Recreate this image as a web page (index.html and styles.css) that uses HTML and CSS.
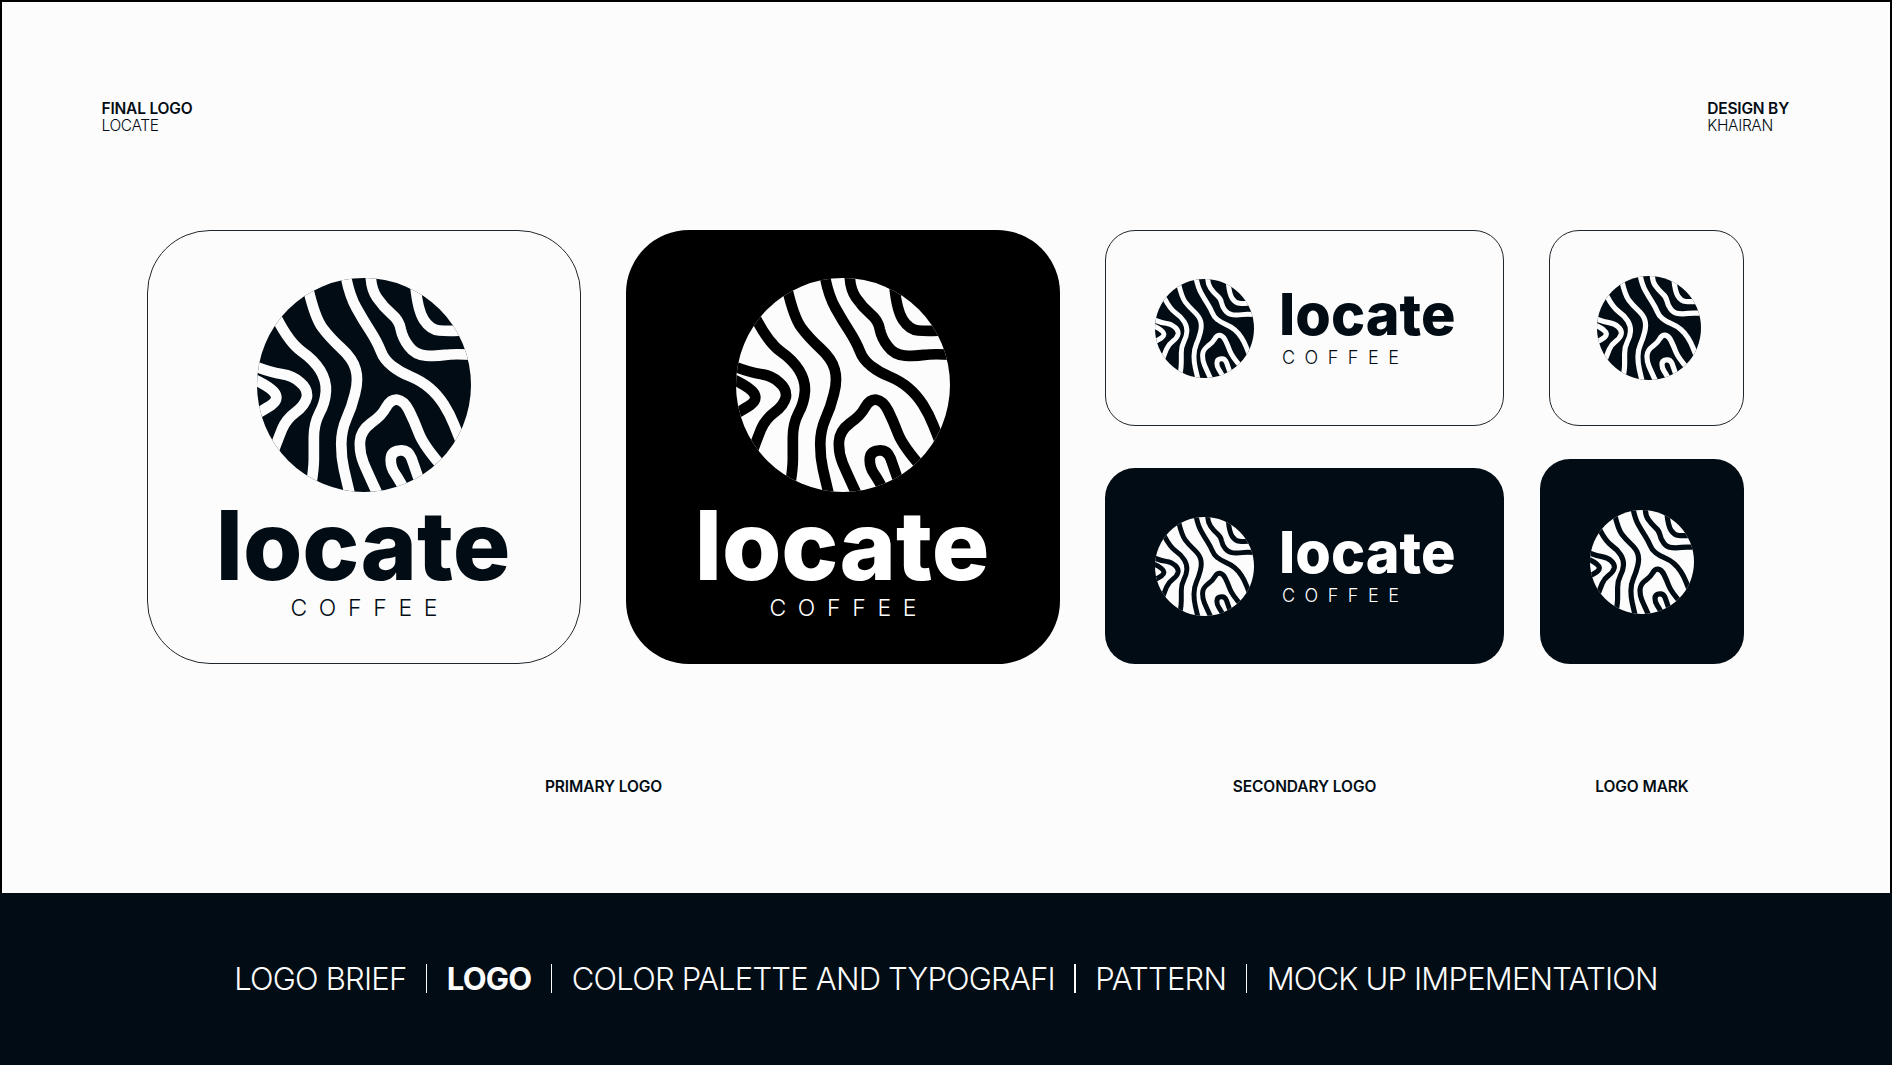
FILE: index.html
```html
<!DOCTYPE html>
<html lang="en">
<head>
<meta charset="utf-8">
<title>Locate Coffee - Final Logo</title>
<link rel="stylesheet" href="styles.css">
</head>
<body>
<svg class="defs" aria-hidden="true">
  <defs>
    <clipPath id="disc"><circle cx="372" cy="373" r="320"/></clipPath>
    <symbol id="mark" viewBox="52 53 640 640">
      <circle class="mark-disc" cx="372" cy="373" r="320"/>
      <g class="mark-cuts" clip-path="url(#disc)">
        <path d="M316 40Q328 105 349 142Q370 180 391 212Q412 245 422 271Q432 298 456 316Q480 335 512 348Q545 362 568 382Q592 402 611 432Q630 462 642 493Q655 525 680 590"/>
        <path d="M392 40Q392 85 411 112Q430 140 454 160Q478 180 482 206Q487 232 506 257Q525 283 557 285Q590 287 615 283Q640 279 710 283"/>
        <path d="M526 80Q533 150 551 178Q570 207 597 210Q625 213 690 209"/>
        <path d="M205 85Q225 170 247 201Q270 232 304 263Q339 295 347 326Q356 358 345 399Q335 440 319 475Q304 510 304 550Q304 590 312 625Q320 660 332 710"/>
        <path d="M112 175Q150 248 186 273Q222 298 241 329Q260 360 258 392Q256 425 239 457Q222 490 222 530Q222 570 222 595Q222 620 215 665"/>
        <path d="M40 315Q90 335 125 340Q160 345 181 365Q205 385 201 410Q195 435 167 455Q140 475 127 505Q115 535 100 575"/>
        <path d="M35 352Q75 370 93 385Q125 410 96 432Q80 443 40 465"/>
        <path d="M420 715Q385 640 371 607Q358 575 360 542Q362 510 393 487Q425 465 438 440Q452 415 472 417Q492 420 507 450Q522 480 536 517Q550 555 612 625"/>
        <path d="M505 710Q480 660 466 640Q452 620 452 597Q452 572 478 569Q503 565 514 592Q524 620 548 690"/>
      </g>
    </symbol>
  </defs>
</svg>

<div class="page">
  <main class="sheet">
    <header class="head">
      <div class="head-block">
        <div class="head-title">FINAL LOGO</div>
        <div class="head-sub">LOCATE</div>
      </div>
      <div class="head-block">
        <div class="head-title">DESIGN BY</div>
        <div class="head-sub">KHAIRAN</div>
      </div>
    </header>

    <section class="gallery">
      <div class="primary-pair">
        <div class="card card-primary theme-light">
          <svg class="logo-mark"><use href="#mark"/></svg>
          <div class="word">locate</div>
          <div class="sub">COFFEE</div>
        </div>
        <div class="card card-primary theme-black">
          <svg class="logo-mark"><use href="#mark"/></svg>
          <div class="word">locate</div>
          <div class="sub">COFFEE</div>
        </div>
      </div>
      <div class="small-set">
        <div class="small-row small-row-top">
          <div class="card card-wide theme-light">
            <svg class="wide-mark"><use href="#mark"/></svg>
            <div class="wide-text">
              <div class="wide-word">locate</div>
              <div class="wide-sub">COFFEE</div>
            </div>
          </div>
          <div class="card card-icon card-icon-light theme-light">
            <svg class="icon-mark"><use href="#mark"/></svg>
          </div>
        </div>
        <div class="small-row small-row-bottom">
          <div class="card card-wide theme-dark">
            <svg class="wide-mark"><use href="#mark"/></svg>
            <div class="wide-text">
              <div class="wide-word">locate</div>
              <div class="wide-sub">COFFEE</div>
            </div>
          </div>
          <div class="card card-icon card-icon-dark theme-dark">
            <svg class="icon-mark"><use href="#mark"/></svg>
          </div>
        </div>
      </div>
    </section>

    <section class="captions">
      <div class="caption caption-primary">PRIMARY LOGO</div>
      <div class="caption-set">
        <div class="caption caption-secondary">SECONDARY LOGO</div>
        <div class="caption caption-mark">LOGO MARK</div>
      </div>
    </section>
  </main>

  <footer class="band">
    <span class="crumb">LOGO BRIEF</span>
    <span class="sep"></span>
    <span class="crumb crumb-active">LOGO</span>
    <span class="sep"></span>
    <span class="crumb">COLOR PALETTE AND TYPOGRAFI</span>
    <span class="sep"></span>
    <span class="crumb">PATTERN</span>
    <span class="sep"></span>
    <span class="crumb">MOCK UP IMPEMENTATION</span>
  </footer>
</div>
</body>
</html>
```

FILE: styles.css
```css
* { box-sizing: border-box; }

html, body { margin: 0; padding: 0; }

body {
  font-family: Inter, "Liberation Sans", sans-serif;
  background: #fcfcfc;
  color: #020c14;
}

.defs { position: absolute; width: 0; height: 0; }

.page {
  width: 1892px;
  height: 1065px;
  display: flex;
  flex-direction: column;
  overflow: hidden;
}

.sheet {
  height: 893px;
  border: 2px solid #000;
  border-bottom: 0;
  background: #fcfcfc;
}

.head {
  display: flex;
  justify-content: space-between;
  padding: 98px 101px 0 99.5px;
  height: 228px;
}

.head-title {
  font-size: 15.5px;
  line-height: 17px;
  font-weight: 600;
  letter-spacing: -0.2px;
}

.head-sub {
  font-size: 15.5px;
  line-height: 17px;
  font-weight: 300;
  letter-spacing: -0.35px;
}

.gallery {
  display: flex;
  gap: 45px;
  padding-left: 145px;
}

.primary-pair {
  display: flex;
  gap: 45px;
}

.card {
  display: flex;
  align-items: center;
  flex-shrink: 0;
}

.theme-light {
  background: #fcfcfc;
  color: #020c14;
  border: 1px solid #20272c;
  --mark: #020c14;
  --cut: #fcfcfc;
}

.theme-black {
  background: #000;
  color: #fff;
  --mark: #fcfcfc;
  --cut: #000;
}

.theme-dark {
  background: #020c14;
  color: #fff;
  --mark: #fcfcfc;
  --cut: #020c14;
}

.mark-disc { fill: var(--mark); }

.mark-cuts {
  fill: none;
  stroke: var(--cut);
  stroke-width: 32;
  stroke-linecap: round;
  stroke-linejoin: round;
}

.card-primary {
  width: 434px;
  height: 434px;
  border-radius: 63px;
  flex-direction: column;
  padding-top: 48px;
}

.theme-light.card-primary { padding-top: 47px; }

.logo-mark {
  width: 214px;
  height: 214px;
  display: block;
  flex-shrink: 0;
}

.word {
  font-size: 96px;
  line-height: 1;
  font-weight: 800;
  margin: 5px 2px 0 0;
}

.sub {
  font-size: 23px;
  line-height: 1;
  font-weight: 300;
  letter-spacing: 11.7px;
  text-indent: 11.7px;
  margin-top: 4px;
}

.small-set {
  width: 639px;
  display: flex;
  flex-direction: column;
  gap: 33px;
}

.small-row {
  display: flex;
  justify-content: space-between;
  align-items: flex-end;
}

.small-row-top { height: 196px; }

.small-row-bottom { height: 205px; }

.card-wide {
  width: 399px;
  height: 196px;
  border-radius: 30px;
  padding-left: 49px;
  gap: 28px;
}

.theme-dark.card-wide { padding-left: 50px; }

.wide-mark {
  width: 99px;
  height: 99px;
  display: block;
  flex-shrink: 0;
}

.wide-text { padding-bottom: 2px; }

.wide-word {
  font-size: 57.5px;
  line-height: 1;
  font-weight: 800;
  margin-left: -3px;
  margin-top: -1px;
}

.wide-sub {
  font-size: 18px;
  line-height: 1;
  font-weight: 300;
  letter-spacing: 9.5px;
  margin-top: 6px;
}

.card-icon {
  justify-content: center;
  border-radius: 30px;
}

.card-icon-light {
  width: 195px;
  height: 196px;
  padding-left: 4px;
}

.card-icon-dark {
  width: 204px;
  height: 205px;
}

.icon-mark {
  width: 104px;
  height: 104px;
  display: block;
}

.captions {
  display: flex;
  gap: 45px;
  padding: 114px 0 0 145px;
}

.caption-primary { width: 913px; }

.caption-set {
  width: 639px;
  display: flex;
  justify-content: space-between;
}

.caption-secondary { width: 399px; }

.caption-mark { width: 204px; }

.caption {
  font-size: 15.5px;
  line-height: 17px;
  font-weight: 600;
  letter-spacing: -0.1px;
  text-align: center;
}

.band {
  height: 172px;
  background: #020c14;
  color: #fcfcfc;
  display: flex;
  align-items: center;
  justify-content: center;
  gap: 19.5px;
  padding-bottom: 1px;
}

.crumb {
  font-size: 31px;
  line-height: 36px;
  font-weight: 300;
  letter-spacing: -0.8px;
  white-space: nowrap;
}

.crumb-active { font-weight: 700; }

.sep {
  width: 1.5px;
  height: 29px;
  background: #fcfcfc;
}
```
